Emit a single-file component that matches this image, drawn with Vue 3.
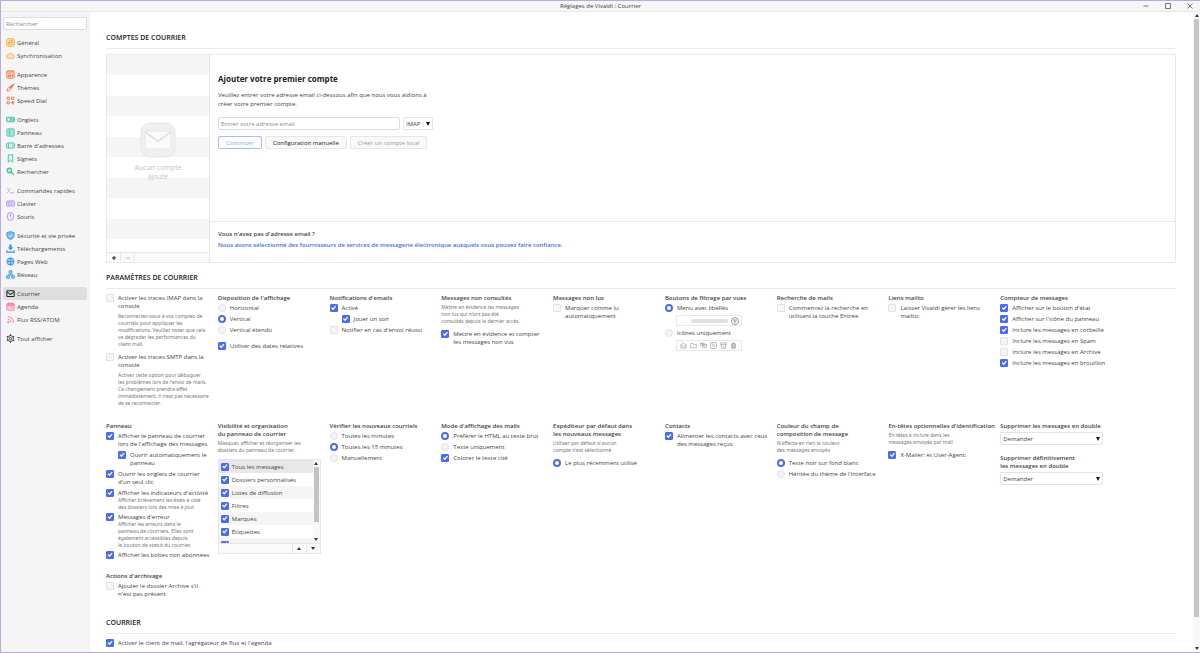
<script setup>
import { ref } from 'vue'

const search = ref('')
const email = ref('')

const navGroups = [
  { color: '#fbb040', items: [['general', 'Général'], ['cloud', 'Synchronisation']] },
  { color: '#ff6b2c', items: [['window', 'Apparence'], ['brush', 'Thèmes'], ['dial', 'Speed Dial']] },
  { color: '#2fc4a2', items: [['tabs', 'Onglets'], ['panel', 'Panneau'], ['bar', "Barre d'adresses"], ['bookmark', 'Signets'], ['search', 'Rechercher']] },
  { color: '#a78bfa', items: [['command', 'Commandes rapides'], ['keyboard', 'Clavier'], ['mouse', 'Souris']] },
  { color: '#2b95f0', items: [['shield', 'Sécurité et vie privée'], ['download', 'Téléchargements'], ['globe', 'Pages Web'], ['network', 'Réseau']] },
  { color: '#ff6fa8', items: [['mail', 'Courrier', true], ['calendar', 'Agenda'], ['rss', 'Flux RSS/ATOM']] },
  { color: '#333333', items: [['gear', 'Tout afficher']] }
]

const icons = {
  general: '<rect x="1" y="1" width="14" height="14" rx="4" fill="currentColor" fill-opacity=".35"/><path d="M11.500 4.500h-4a2.500 2.500 0 0 0-2.500 2.500v4.500h3.500a3 3 0 0 0 3-3zM5 8h6"/>',
  cloud: '<path d="M4 13a3 3 0 0 1-.5-6 2 2 0 0 1 2-1.500A4 4 0 0 1 12.500 8a2.600 2.600 0 0 1 .5 5z" fill="currentColor" fill-opacity=".3"/>',
  window: '<rect x="1.500" y="1.500" width="13" height="13" rx="1.500" fill="currentColor" fill-opacity=".1"/><path d="M1.500 3.500h13M4 7h5M4 9.500h4v2.500H4zM11.500 7v5.500"/>',
  brush: '<path d="M14.500 1.500 6.500 7l2.500 2.500z" fill="currentColor"/><path d="M7 8.500c-3-1-4 1-4 3L1.500 14c4 1 7-1 6.500-4z"/>',
  dial: '<path d="M2 2h4v4H2zM10 2h4v4h-4zM2 10h4v4H2z"/><path d="M12 9v6M9 12h6" stroke-width="2"/>',
  tabs: '<rect x="1" y="4" width="14" height="8" rx="1" fill="currentColor" fill-opacity=".3"/><path d="M8 4v8" /><path d="M3.500 7h3v2h-3z" fill="#fff" stroke="none"/><path d="M10.500 6v4M13 6v4"/>',
  panel: '<rect x="1.500" y="1.500" width="13" height="13" rx="1.500" fill="currentColor" fill-opacity=".1"/><path d="M6.500 2v12M3 5h2M3 8h2M3 11h2"/><path d="M7 2.500h7v11H7z" fill="currentColor" fill-opacity=".3" stroke="none"/>',
  bar: '<rect x="1" y="3.500" width="14" height="9" rx="1.500" fill="currentColor" fill-opacity=".1"/><path d="M4.500 4v8M12 6v4"/>',
  bookmark: '<path d="M4 1.500h8v13l-4-3.500-4 3.500z" fill="currentColor" fill-opacity=".1"/>',
  search: '<circle cx="6" cy="6" r="4" fill="currentColor" fill-opacity=".25" stroke-width="2"/><path d="m9 9 5 5" stroke-width="2.500"/>',
  command: '<path d="m2 4 4 4-4 4M8 12h6"/><path d="M6 4h3" stroke-opacity=".5"/>',
  keyboard: '<rect x="1" y="3.500" width="14" height="9" rx="1.500" fill="currentColor" fill-opacity=".25"/><path d="M3.500 6.500h9M3.500 9.500h9" stroke-dasharray="2 1"/>',
  mouse: '<rect x="2.500" y="1" width="11" height="14" rx="5.500" fill="currentColor" fill-opacity=".1"/><path d="M8 4v4"/>',
  shield: '<path d="m8 1 6.500 2v4.500c0 4-3 6.500-6.500 7.500-3.500-1-6.500-3.500-6.500-7.500V3z" fill="currentColor" fill-opacity=".6"/><path d="m5 8 2.500 2.500L11.500 6" stroke="#fff"/>',
  download: '<path d="M6 1h4v5h3l-5 5-5-5h3z" fill="currentColor" stroke="none"/><path d="M1.500 11v3.500h13V11" stroke-width="2"/>',
  globe: '<circle cx="8" cy="8" r="6.500" fill="currentColor" fill-opacity=".15"/><path d="M1.500 8h13M8 1.500v13M8 1.500c-4.500 4-4.500 9 0 13M8 1.500c4.500 4 4.500 9 0 13"/>',
  network: '<path d="M5.500 1.500h5v4h-5zM1 10.500h5v4H1zM10 10.500h5v4h-5zM8 5.500v3M3.500 10.500v-2h9v2" fill="currentColor" fill-opacity=".25"/>',
  mail: '<rect x="1.500" y="3" width="13" height="10.500" rx="1" stroke-width="1.800"/><path d="m2 5.500 6 4 6-4" stroke-width="1.800"/>',
  calendar: '<rect x="1.500" y="2.500" width="13" height="12" rx="1.500" fill="currentColor" fill-opacity=".25"/><path d="M1.500 5.500h13M5 1v3M11 1v3" stroke-width="2.400"/><path d="M9 9.500h3"/>',
  rss: '<circle cx="4" cy="12.500" r="1.200" fill="currentColor"/><path d="M3 7.500c3.500 0 6 2.500 6 6M3 3c6 0 10.500 4.500 10.500 10.500"/>',
  gear: '<circle cx="8" cy="8" r="5.200"/><circle cx="8" cy="8" r="2"/><path d="M8 .5v2.500M8 13v2.500M1.500 4.200l2.200 1.300M12.300 10.500l2.200 1.300M1.500 11.800l2.200-1.300M12.300 5.500l2.200-1.300" stroke-width="2"/>'
}

const title = (text) => ({ kind: 'title', text })
const hint = (text) => ({ kind: 'hint', text })
const note = (text) => ({ kind: 'note', text })
const check = (text, on = false, mod = '') => ({ kind: 'checkbox', text, on, mod })
const radio = (name, text, on = false, mod = '') => ({ kind: 'radio', name, text, on, mod })

const cells = [
  [
    check('Activer les traces IMAP dans la\nconsole'),
    hint('Reconnectez-vous à vos comptes de\ncourriels pour appliquer les\nmodifications. Veuillez noter que cela\nva dégrader les performances du\nclient mail.'),
    check('Activer les traces SMTP dans la\nconsole'),
    hint("Activez cette option pour déboguer\nles problèmes lors de l'envoi de mails.\nCe changement prendra effet\nimmédiatement, il n'est pas nécessaire\nde se reconnecter.")
  ],
  [
    title("Disposition de l'affichage"),
    radio('layout', 'Horizontal'),
    radio('layout', 'Vertical', true),
    radio('layout', 'Vertical étendu'),
    check('Utiliser des dates relatives', true, 'apart')
  ],
  [
    title("Notifications d'emails"),
    check('Activé', true),
    check('Jouer un son', true, 'nested'),
    check("Notifier en cas d'envoi réussi")
  ],
  [
    title('Messages non consultés'),
    hint("Mettre en évidence les messages\nnon lus qui n'ont pas été\nconsultés depuis le dernier accès."),
    check('Mettre en évidence et compter\nles messages non vus', true)
  ],
  [title('Messages non lus'), check('Marquer comme lu\nautomatiquement')],
  [
    title('Boutons de filtrage par vues'),
    radio('filter', 'Menu avec libellés', true),
    { kind: 'menuPreview' },
    radio('filter', 'Icônes uniquement'),
    { kind: 'iconPreview' }
  ],
  [title('Recherche de mails'), check('Commencez la recherche en\nutilisant la touche Entrée')],
  [title('Liens mailto'), check('Laisser Vivaldi gérer les liens\nmailto:')],
  [
    title('Compteur de messages'),
    check("Afficher sur le bouton d'état", true),
    check("Afficher sur l'icône du panneau", true),
    check('Inclure les messages en corbeille', true),
    check('Inclure les messages en Spam'),
    check('Inclure les messages en Archive'),
    check('Inclure les messages en brouillon', true)
  ],
  [
    title('Panneau'),
    check("Afficher le panneau de courrier\nlors de l'affichage des messages", true),
    check('Ouvrir automatiquement le\npanneau', true, 'nested'),
    check("Ouvrir les onglets de courrier\nd'un seul clic", true),
    check("Afficher les indicateurs d'activité", true),
    note('Afficher brièvement les états à coté\ndes dossiers lors des mise à jour.'),
    check("Messages d'erreur", true),
    note('Afficher les erreurs dans le\npanneau de courriers. Elles sont\négalement accessibles depuis\nle bouton de statut du courrier.'),
    check('Afficher les boîtes non abonnées', true)
  ],
  [
    title('Visibilité et organisation\ndu panneau de courrier'),
    hint('Masquer, afficher et réorganiser les\ndossiers du panneau de courrier.'),
    { kind: 'folders' }
  ],
  [
    title('Vérifier les nouveaux courriels'),
    radio('poll', 'Toutes les minutes'),
    radio('poll', 'Toutes les 15 minutes', true),
    radio('poll', 'Manuellement')
  ],
  [
    title("Mode d'affichage des mails"),
    radio('mode', 'Préférer le HTML au texte brut', true),
    radio('mode', 'Texte uniquement'),
    check('Colorer le texte cité', true)
  ],
  [
    title('Expéditeur par défaut dans\nles nouveaux messages'),
    hint("Utiliser par défaut si aucun\ncompte n'est sélectionné"),
    radio('sender', 'Le plus récemment utilisé', true)
  ],
  [title('Contacts'), check('Alimenter les contacts avec ceux\ndes messages reçus', true)],
  [
    title('Couleur du champ de\ncomposition de message'),
    hint("N'affecte en rien la couleur\ndes messages envoyés"),
    radio('compose', 'Texte noir sur fond blanc', true),
    radio('compose', "Héritée du thème de l'interface")
  ],
  [
    title("En-têtes optionnelles d'identification"),
    hint('En-têtes à inclure dans les\nmessages envoyés par mail'),
    check('X-Mailer: et User-Agent:', true)
  ],
  [
    title('Supprimer les messages en double'),
    { kind: 'select', label: 'Supprimer les messages en double' },
    title('Supprimer définitivement\nles messages en double'),
    { kind: 'select', label: 'Supprimer définitivement les messages en double' }
  ],
  [title("Actions d'archivage"), check("Ajouter le dossier Archive s'il\nn'est pas présent")]
]

const folders = ['Tous les messages', 'Dossiers personnalisés', 'Listes de diffusion', 'Filtres', 'Marques', 'Étiquettes', "Fils d'actualité"]

const filterIcons = [
  '<path d="M2 7l6-5 6 5v7H2zM2 7l6 4 6-4"/>',
  '<path d="M1.500 3.500h5l1.500 2h6.500v8h-13z"/>',
  '<path d="M1 3h5v5H1zM6 6h9v7H6zM6 6l4.500 4L15 6M1 3h9v3"/>',
  '<rect x="1" y="1" width="14" height="14" rx="2"/><path d="M4 11.500h.5M4 7.500c2.500 0 4 1.500 4 4M4 4c5 0 8 3.500 8 7.500"/>',
  '<path d="M1.500 2h13v4h-13zM3 6v8h10V6M6 9l2 2 2-2"/>',
  '<path d="M4 4h8v10H4zM6 2h4M6.500 5v8M9.500 5v8" stroke-width="2"/>'
]
</script>

<template>
  <div class="app">
    <header class="titlebar">
      <h1>Réglages de Vivaldi : Courrier</h1>
      <div class="controls">
        <button type="button" aria-label="Réduire"><svg viewBox="0 0 8 8"><path d="M1.500 4h5" /></svg></button>
        <button type="button" aria-label="Agrandir"><svg viewBox="0 0 8 8"><path d="M1.500 1.500h5v5h-5z" /></svg></button>
        <button type="button" aria-label="Fermer"><svg viewBox="0 0 8 8"><path d="m1.500 1.500 5 5m0-5-5 5" /></svg></button>
      </div>
    </header>

    <div class="body">
      <aside class="sidebar">
        <input v-model="search" class="search" type="search" placeholder="Rechercher" aria-label="Rechercher" />
        <nav>
          <ul v-for="(g, gi) in navGroups" :key="gi">
            <li v-for="item in g.items" :key="item[0]">
              <a href="#" :class="{ active: item[2] }">
                <svg class="icon" viewBox="0 0 16 16" :style="{ color: item[2] ? '#222222' : g.color }" v-html="icons[item[0]]" />
                <span>{{ item[1] }}</span>
              </a>
            </li>
          </ul>
        </nav>
      </aside>

      <main>
        <section>
          <h2>Comptes de courrier</h2>
          <div class="accounts">
            <div class="account-list">
              <div class="empty">
                <svg viewBox="0 0 36 36">
                  <rect x="1" y="1" width="34" height="34" rx="9" fill="#f0f0f0" stroke="#e6e6e6" />
                  <rect x="5" y="9" width="26" height="18" rx="2" fill="#fafafa" stroke="#e6e6e6" />
                  <path d="m5 10 13 9 13-9" fill="none" stroke="#dcdcdc" stroke-width="1.500" />
                </svg>
                <p>Aucun compte<br />ajouté</p>
              </div>
              <div class="list-tools">
                <button type="button" aria-label="Ajouter un compte"><svg viewBox="0 0 8 8"><path d="M4 2v4M2 4h4" /></svg></button>
                <button type="button" disabled aria-label="Supprimer le compte"><svg viewBox="0 0 8 8"><path d="M2 4h4" /></svg></button>
              </div>
            </div>
            <div class="account-main">
              <form @submit.prevent>
                <h3>Ajouter votre premier compte</h3>
                <p>Veuillez entrer votre adresse email ci-dessous afin que nous vous aidions à<br />créer votre premier compte.</p>
                <div class="line">
                  <input v-model="email" type="email" placeholder="Entrer votre adresse email" aria-label="Adresse email" />
                  <span class="select protocol">
                    <select aria-label="Protocole"><option>IMAP</option><option>POP3</option></select>
                  </span>
                </div>
                <div class="line">
                  <button type="submit" class="btn primary">Continuer</button>
                  <button type="button" class="btn">Configuration manuelle</button>
                  <button type="button" class="btn" disabled>Créer un compte local</button>
                </div>
              </form>
              <div class="providers">
                <strong>Vous n'avez pas d'adresse email ?</strong>
                <a href="#">Nous avons sélectionné des fournisseurs de services de messagerie électronique auxquels vous pouvez faire confiance.</a>
              </div>
            </div>
          </div>
        </section>

        <section>
          <h2>Paramètres de courrier</h2>
          <div class="settings">
            <div v-for="(cell, ci) in cells" :key="ci" class="cell">
              <template v-for="(b, bi) in cell" :key="bi">
                <h4 v-if="b.kind === 'title'">{{ b.text }}</h4>
                <p v-else-if="b.kind === 'hint'" class="hint" :class="{ inset: ci === 0 }">{{ b.text }}</p>
                <p v-else-if="b.kind === 'note'" class="note">{{ b.text }}</p>
                <label v-else-if="b.kind === 'checkbox' || b.kind === 'radio'" class="option" :class="b.mod">
                  <input :type="b.kind" :name="b.name" :checked="b.on" />
                  <span>{{ b.text }}</span>
                </label>
                <div v-else-if="b.kind === 'menuPreview'" class="preview menu">
                  <i></i>
                  <svg viewBox="0 0 16 16"><circle cx="8" cy="8" r="7" /><path d="M4 6h8M5.500 8.500h5M7 11h2" /></svg>
                </div>
                <div v-else-if="b.kind === 'iconPreview'" class="preview">
                  <svg v-for="(p, pi) in filterIcons" :key="pi" viewBox="0 0 16 16" v-html="p" />
                </div>
                <div v-else-if="b.kind === 'folders'" class="folders">
                  <div class="folder-view">
                    <ul>
                      <li v-for="f in folders" :key="f">
                        <label><input type="checkbox" checked />{{ f }}</label>
                      </li>
                    </ul>
                    <div class="scroll"><i class="up"></i><b></b><i class="down"></i></div>
                  </div>
                  <div class="folder-tools">
                    <button type="button" aria-label="Monter"><i class="up"></i></button>
                    <button type="button" aria-label="Descendre"><i class="down"></i></button>
                  </div>
                </div>
                <span v-else class="select">
                  <select :aria-label="b.label"><option>Demander</option></select>
                </span>
              </template>
            </div>
          </div>
        </section>

        <section>
          <h2>Courrier</h2>
          <label class="option">
            <input type="checkbox" checked />
            <span>Activer le client de mail, l'agrégateur de flux et l'agenda</span>
          </label>
        </section>
      </main>

      <div class="scroll page"><i class="up"></i><b></b><i class="down"></i></div>
    </div>
  </div>
</template>

<style>
body {
  background: #ffffff;
}
</style>

<style scoped>
* {
  box-sizing: border-box;
  margin: 0;
  padding: 0;
}
.app {
  display: flex;
  flex-direction: column;
  height: 100vh;
  overflow: hidden;
  border: 1px solid #bea9d9;
  border-right: 0;
  font: 6px/8px "Open Sans", "Noto Sans", sans-serif;
  color: #444444;
}
button,
input,
select {
  font: inherit;
  color: inherit;
  appearance: none;
}
ul {
  list-style: none;
}
.titlebar {
  display: grid;
  grid-template-columns: 1fr auto 1fr;
  flex: none;
  align-items: center;
  height: 11px;
  background: #f6f6f6;
  border-bottom: 1px solid #e8e8e8;
}
.titlebar h1 {
  grid-column: 2;
  font-size: 6px;
  font-weight: 400;
}
.controls {
  display: flex;
  justify-content: flex-end;
  gap: 14px;
  padding-right: 6px;
}
.controls button {
  display: flex;
  border: 0;
  background: none;
}
.controls svg {
  width: 8px;
  height: 8px;
  fill: none;
  stroke: #777777;
}
.body {
  display: flex;
  flex: 1;
  min-height: 0;
}
.sidebar {
  flex: none;
  width: 89px;
  padding: 5px 3px 0 2px;
  background: #f5f5f5;
}
.search {
  display: block;
  width: 100%;
  height: 13px;
  padding: 0 2px;
  border: 1px solid #dddddd;
  border-radius: 2px;
  background: #ffffff;
}
input::placeholder {
  color: #8a8a8a;
}
nav {
  display: flex;
  flex-direction: column;
  gap: 6px;
  padding-top: 6px;
}
nav a {
  display: flex;
  align-items: center;
  gap: 2px;
  height: 13px;
  padding-left: 3px;
  border-radius: 2px;
  color: #444444;
  text-decoration: none;
  white-space: nowrap;
}
nav a.active {
  background: #dedede;
}
.icon {
  width: 9px;
  height: 9px;
  fill: none;
  stroke: currentColor;
  stroke-width: 1.500;
}
main {
  flex: 1;
  min-width: 0;
  padding: 19px 17px 0 16px;
  overflow: hidden;
}
h2 {
  height: 18px;
  padding-top: 2px;
  margin-bottom: 5px;
  border-bottom: 1px solid #eaeaea;
  font-size: 7px;
  font-weight: 600;
  line-height: 10px;
  text-transform: uppercase;
  color: #222222;
}
.accounts {
  display: flex;
  height: 209px;
  margin-bottom: 8px;
  border: 1px solid #e8e8e8;
}
.account-list {
  display: flex;
  flex-direction: column;
  width: 103px;
  border-right: 1px solid #e8e8e8;
}
.empty {
  display: flex;
  flex: 1;
  flex-direction: column;
  align-items: center;
  justify-content: center;
  gap: 5px;
  padding-bottom: 4px;
  background: repeating-linear-gradient(#f5f5f5 0 10.4%, #ffffff 10.4% 20.8%);
  font-size: 7px;
  line-height: 9px;
  text-align: center;
  color: #c4c4c4;
}
.empty svg {
  width: 36px;
  height: 36px;
}
.list-tools {
  display: flex;
  height: 10px;
  border-top: 1px solid #e8e8e8;
  background: #fafafa;
}
.list-tools button {
  display: grid;
  place-items: center;
  width: 14px;
  border: 0;
  border-right: 1px solid #eaeaea;
  background: none;
}
.list-tools svg {
  width: 8px;
  height: 8px;
  fill: none;
  stroke: #222222;
}
.list-tools button:disabled svg {
  stroke: #bbbbbb;
}
.account-main {
  display: flex;
  flex: 1;
  flex-direction: column;
}
.account-main form {
  flex: 1;
  padding: 18px 8px 0;
}
.account-main h3 {
  margin-bottom: 7px;
  font-size: 8px;
  line-height: 11px;
  color: #222222;
}
.account-main p {
  margin-bottom: 8px;
  line-height: 9px;
}
.line {
  display: flex;
  gap: 3px;
  margin-bottom: 6px;
}
.line input {
  width: 182px;
  height: 13px;
  padding: 0 2px;
  border: 1px solid #dcdcdc;
  border-radius: 2px;
}
.btn {
  height: 13px;
  padding: 0 7px;
  border: 1px solid #e6e6e6;
  border-radius: 2px;
  background: #f9f9f9;
  color: #222222;
}
.btn.primary {
  border-color: #a8bafb;
  background: #ffffff;
  color: #93a6f7;
}
.btn:disabled {
  color: #999999;
}
.providers {
  display: flex;
  flex-direction: column;
  gap: 3px;
  height: 41px;
  padding: 8px;
  border-top: 1px solid #e8e8e8;
}
.providers strong {
  font-weight: 600;
}
.providers a {
  font-weight: 600;
  color: #4a6cf0;
  text-decoration: none;
}
.settings {
  display: grid;
  grid-template-columns: repeat(9, 1fr);
  gap: 10px 9px;
  padding-right: 73px;
  margin-bottom: 15px;
}
.cell {
  min-width: 0;
  white-space: pre;
}
h4 {
  margin-bottom: 2px;
  font-size: 6px;
  font-weight: 600;
  line-height: 8px;
}
.option {
  display: flex;
  gap: 4px;
  margin-bottom: 3px;
}
.option.nested {
  padding-left: 12px;
}
.option.apart {
  margin-top: 8px;
}
input[type='checkbox'],
input[type='radio'] {
  display: grid;
  flex: none;
  place-items: center;
  width: 8px;
  height: 8px;
  border: 1px solid #e2e2e2;
  border-radius: 1px;
  background: #f5f5f5;
}
input[type='radio'] {
  border-radius: 50%;
}
input[type='checkbox']:checked {
  border-color: #4a6cf0;
  background: #4a6cf0;
}
input[type='checkbox']:checked::before {
  width: 6px;
  height: 6px;
  background: #ffffff;
  clip-path: polygon(8% 50%, 24% 36%, 40% 56%, 78% 12%, 94% 26%, 42% 86%);
  content: '';
}
input[type='radio']:checked {
  border: 2px solid #4a6cf0;
  background: #ffffff;
}
.hint,
.note {
  font-family: "Noto Sans", "Open Sans", sans-serif;
  font-size: 5px;
  line-height: 7px;
  color: #777777;
}
.hint {
  margin-bottom: 5px;
}
.hint.inset {
  padding-left: 12px;
}
.note {
  margin: -3px 0 2px;
  padding-left: 12px;
}
.preview {
  display: flex;
  align-items: center;
  justify-content: space-around;
  width: 66px;
  height: 11px;
  margin: 0 0 3px 11px;
  padding: 0 2px;
  border: 1px solid #e8e8e8;
}
.preview svg {
  width: 7px;
  height: 7px;
  fill: none;
  stroke: #999999;
  stroke-width: 1.500;
}
.preview.menu {
  justify-content: flex-end;
  gap: 3px;
}
.preview.menu svg {
  width: 8px;
  height: 8px;
  stroke: #777777;
}
.preview i {
  width: 37px;
  height: 4px;
  border-radius: 2px;
  background: #e0e0e0;
}
.select {
  position: relative;
  display: block;
  margin-bottom: 9px;
}
.select select {
  width: 100%;
  height: 13px;
  padding: 0 2px;
  border: 1px solid #e4e4e4;
  border-radius: 1px;
  background: #ffffff;
}
.select::after {
  position: absolute;
  top: 5px;
  right: 3px;
  border: solid transparent;
  border-width: 4px 2px 0;
  border-top-color: #111111;
  content: '';
}
.protocol {
  width: 30px;
  margin: 0;
}
.folders {
  border: 1px solid #e6e6e6;
}
.folder-view {
  display: flex;
  height: 83px;
  overflow: hidden;
}
.folder-view ul {
  flex: 1;
}
.folder-view label {
  display: flex;
  align-items: center;
  gap: 3px;
  height: 13px;
  padding-left: 2px;
}
.folder-view li:nth-child(odd) {
  background: #f5f5f5;
}
.folder-view li:first-child {
  background: #e8e8e8;
}
.folder-tools {
  display: flex;
  justify-content: flex-end;
  height: 10px;
  border-top: 1px solid #e6e6e6;
  background: #fafafa;
}
.folder-tools button {
  display: grid;
  place-items: center;
  width: 14px;
  border: 0;
  border-left: 1px solid #e6e6e6;
  background: none;
}
.up,
.down {
  width: 0;
  height: 0;
  border: solid transparent;
}
.up {
  border-width: 0 2px 3px;
  border-bottom-color: #333333;
}
.down {
  border-width: 3px 2px 0;
  border-top-color: #333333;
}
.scroll {
  display: flex;
  flex: none;
  flex-direction: column;
  align-items: center;
  justify-content: space-between;
  width: 7px;
  padding: 2px 0;
  background: #f8f8f8;
}
.scroll b {
  flex: 0 0 55px;
  width: 5px;
  margin: 2px 0 auto;
  background: #c4c4c4;
}
.scroll.page b {
  flex-basis: 94%;
}
</style>
